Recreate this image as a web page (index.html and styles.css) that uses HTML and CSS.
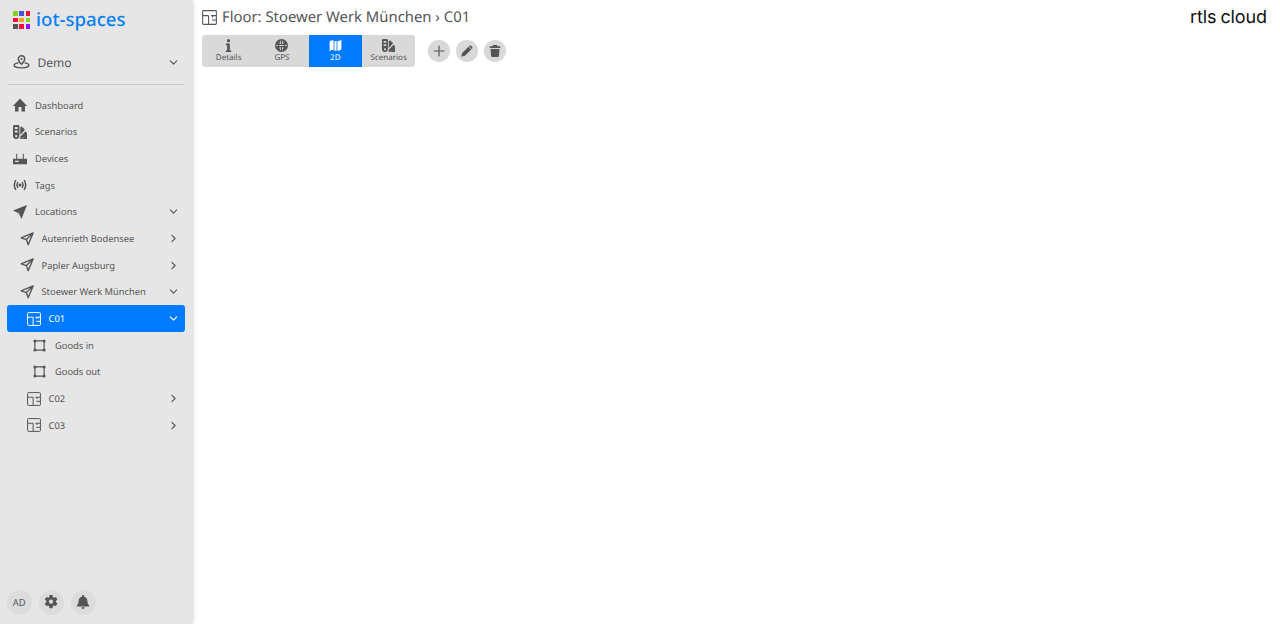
FILE: index.html
```html
<!DOCTYPE html>
<html>
<head>
    <title>iot-spaces</title>
    <link rel="stylesheet" href="styles.css">
</head>
<body>
    <svg class="sprite" xmlns="http://www.w3.org/2000/svg">
        <symbol id="i-home" viewBox="0 0 24 24"><path d="M9.500 23v-7.500h5V23h6v-9.500H24L12 1 0 13.500h3.500V23z"/></symbol>
        <symbol id="i-swatch" viewBox="0 0 24 24"><path fill-rule="evenodd" d="M0 2.500C0 1.100 1.100 0 2.500 0h6C9.900 0 11 1.100 11 2.500V19c0 2.800-2.200 5-5 5h-1c-2.800 0-5-2.200-5-5zM3 3.500v3.200h5V3.500zm0 6v3.200h5V9.500zM5.500 17a2 2 0 1 0 0 4 2 2 0 0 0 0-4z"/><path d="M12.500 4 15 2.500l5.500 5.500-8 9zM12.500 20l9-9.500 2.500 3v1.500L15.500 24H24v-8.500L14.500 24h-2z"/></symbol>
        <symbol id="i-router" viewBox="0 0 24 24"><path fill-rule="evenodd" d="M5.500 3h1.700v8.500h9.600V3h1.700v8.500H24V21H0v-9.500h5.500zM3.500 15v2h6.500v-2z"/></symbol>
        <symbol id="i-tags" viewBox="0 0 24 24"><circle cx="12" cy="12" r="2.600"/><path d="M4.500 4.500C1.500 8.500 1.500 15.500 4.500 19.500M19.500 4.500c3 4 3 11 0 15M8 8c-1.500 2.300-1.500 5.700 0 8M16 8c1.500 2.300 1.500 5.700 0 8" fill="none" stroke="currentColor" stroke-width="2.600" stroke-linecap="round"/></symbol>
        <symbol id="i-nav" viewBox="0 0 24 24"><path d="M24 0 0 9.500l10 4.500 4.500 10z"/></symbol>
        <symbol id="i-nav-line" viewBox="0 0 24 24"><path d="M22.500 1.500 2 10l9 3 3 9zM11 13 22.500 1.500" fill="none" stroke="currentColor" stroke-width="2.300" stroke-linejoin="round"/></symbol>
        <symbol id="i-floor" viewBox="0 0 24 24"><path d="M2.500 1h19A1.500 1.500 0 0 1 23 2.500v19a1.500 1.500 0 0 1-1.500 1.500h-19A1.500 1.500 0 0 1 1 21.500v-19A1.500 1.500 0 0 1 2.500 1zM1 9h9.500M10.500 9v14M14.500 9H23M16 16H23M17 9v3" fill="none" stroke="currentColor" stroke-width="1.700"/></symbol>
        <symbol id="i-area" viewBox="0 0 24 24"><path d="M3.500 3.500h17v17h-17z" fill="none" stroke="currentColor" stroke-width="2.200"/><circle cx="3.500" cy="3.500" r="2.800"/><circle cx="20.500" cy="3.500" r="2.800"/><circle cx="3.500" cy="20.500" r="2.800"/><circle cx="20.500" cy="20.500" r="2.800"/></symbol>
        <symbol id="i-pin" viewBox="0 0 24 24"><path d="M12 2.500a4.500 4.500 0 0 0-4.500 4.500c0 3 4.500 7.500 4.500 7.500s4.500-4.500 4.500-7.500A4.500 4.500 0 0 0 12 2.500z" fill="none" stroke="currentColor" stroke-width="2"/><circle cx="12" cy="7" r="1.500"/><path d="M7 12.500c-3.500.7-5.500 1.900-5.500 3.300 0 2 4.700 3.700 10.500 3.700s10.500-1.700 10.500-3.700c0-1.400-2-2.600-5.500-3.300" fill="none" stroke="currentColor" stroke-width="1.800" stroke-linecap="round"/></symbol>
        <symbol id="i-down" viewBox="0 0 24 24"><path d="M5 8.500l7 7 7-7" fill="none" stroke="currentColor" stroke-width="2.400" stroke-linecap="round" stroke-linejoin="round"/></symbol>
        <symbol id="i-right" viewBox="0 0 24 24"><path d="M8.500 5l7 7-7 7" fill="none" stroke="currentColor" stroke-width="2.400" stroke-linecap="round" stroke-linejoin="round"/></symbol>
        <symbol id="i-gear" viewBox="0 0 24 24"><path fill-rule="evenodd" d="M9.500 0h5l.8 3.500 1.700 1 3.500-1 2.500 4.300-2.700 2.400v2l2.700 2.400-2.500 4.300-3.500-1-1.700 1-.8 3.600h-5l-.8-3.600-1.700-1-3.500 1L1.500 14.600l2.700-2.400v-2L1.500 7.800 4 3.500l3.500 1 1.700-1zM12 7.800a3.700 3.700 0 1 0 0 7.400 3.700 3.700 0 0 0 0-7.400z"/></symbol>
        <symbol id="i-bell" viewBox="0 0 24 24"><path d="M12 0a2 2 0 0 0-2 2v.8C6.600 3.700 4.500 6.600 4.500 10c0 4.500-1.200 6-3 7.800V19.500h21v-1.700c-1.800-1.800-3-3.300-3-7.800 0-3.400-2.100-6.300-5.500-7.200V2a2 2 0 0 0-2-2zM9.200 21a2.800 2.800 0 0 0 5.600 0z"/></symbol>
        <symbol id="i-info" viewBox="0 0 24 24"><circle cx="12" cy="3" r="3"/><path d="M7 8.500h7.500V21H17v3H7v-3h2.500v-9.500H7z"/></symbol>
        <symbol id="i-globe" viewBox="0 0 24 24"><path fill-rule="evenodd" d="M12 0a12 12 0 1 0 0 24 12 12 0 0 0 0-24zM10.800 2.500C9.300 4.300 8.500 6.500 8.300 9h2.500V2.500zM13.200 2.500V9h2.500c-.2-2.500-1-4.700-2.500-6.500zM8.300 15c.2 2.500 1 4.700 2.500 6.500V15zM13.200 15v6.500c1.500-1.800 2.300-4 2.500-6.500zM2.300 11a9.500 9.500 0 0 0 0 2h3.400v-2zM8 11v2h8v-2zM18.300 11v2h3.400a9.500 9.500 0 0 0 0-2z"/></symbol>
        <symbol id="i-map" viewBox="0 0 24 24"><path d="M1 5c2.500-2.500 5-3 7.500-2v18c-2.500-1-5-.5-7.500 2zM15.500 3c2.500 1 5 .5 7.500-2v18c-2.500 2.500-5 3-7.500 2zM10 3.300c1.300.6 2.700.6 4 0v18c-1.300.6-2.700.6-4 0z"/></symbol>
        <symbol id="i-plus" viewBox="0 0 24 24"><path d="M12 2v20M2 12h20" fill="none" stroke="currentColor" stroke-width="2.400" stroke-linecap="round"/></symbol>
        <symbol id="i-pencil" viewBox="0 0 24 24"><path d="M0.500 23.500l1.800-7.300L15 3.500l5.500 5.500L7.800 21.700zM16.500 2c1.200-1.200 3-1.200 4.200 0L22 3.300c1.200 1.200 1.200 3 0 4.200l-.5.500L16 2.500z"/></symbol>
        <symbol id="i-trash" viewBox="0 0 24 24"><path d="M8 0h8l1 2.500h5.500V6h-21V2.500H7zM3 8h18l-1.200 14a2.200 2.200 0 0 1-2.200 2H6.400a2.200 2.200 0 0 1-2.200-2z"/></symbol>
    </svg>

    <div class="app">
        <!-- sidebar -->
        <aside class="sidebar">
            <div class="brand">
                <div class="brand-grid">
                    <span class="c-green"></span><span class="c-blue"></span><span class="c-red"></span>
                    <span class="c-red"></span><span class="c-orange"></span><span class="c-green"></span>
                    <span class="c-gray"></span><span class="c-red"></span><span class="c-purple"></span>
                </div>
                <span class="brand-name">iot-spaces</span>
            </div>

            <div class="org">
                <svg class="org-icon"><use href="#i-pin"/></svg>
                <span class="org-name">Demo</span>
                <svg class="chev"><use href="#i-down"/></svg>
            </div>

            <nav class="nav">
                <a class="nav-item"><svg class="ico"><use href="#i-home"/></svg><span class="label">Dashboard</span></a>
                <a class="nav-item"><svg class="ico"><use href="#i-swatch"/></svg><span class="label">Scenarios</span></a>
                <a class="nav-item"><svg class="ico"><use href="#i-router"/></svg><span class="label">Devices</span></a>
                <a class="nav-item"><svg class="ico"><use href="#i-tags"/></svg><span class="label">Tags</span></a>
                <a class="nav-item"><svg class="ico"><use href="#i-nav"/></svg><span class="label">Locations</span><svg class="chev"><use href="#i-down"/></svg></a>
                <a class="nav-item lvl1"><svg class="ico"><use href="#i-nav-line"/></svg><span class="label">Autenrieth Bodensee</span><svg class="chev"><use href="#i-right"/></svg></a>
                <a class="nav-item lvl1"><svg class="ico"><use href="#i-nav-line"/></svg><span class="label">Papler Augsburg</span><svg class="chev"><use href="#i-right"/></svg></a>
                <a class="nav-item lvl1"><svg class="ico"><use href="#i-nav-line"/></svg><span class="label">Stoewer Werk München</span><svg class="chev"><use href="#i-down"/></svg></a>
                <a class="nav-item lvl2 active"><svg class="ico"><use href="#i-floor"/></svg><span class="label">C01</span><svg class="chev"><use href="#i-down"/></svg></a>
                <a class="nav-item lvl3"><svg class="ico"><use href="#i-area"/></svg><span class="label">Goods in</span></a>
                <a class="nav-item lvl3"><svg class="ico"><use href="#i-area"/></svg><span class="label">Goods out</span></a>
                <a class="nav-item lvl2"><svg class="ico"><use href="#i-floor"/></svg><span class="label">C02</span><svg class="chev"><use href="#i-right"/></svg></a>
                <a class="nav-item lvl2"><svg class="ico"><use href="#i-floor"/></svg><span class="label">C03</span><svg class="chev"><use href="#i-right"/></svg></a>
            </nav>

            <div class="side-footer">
                <button class="round">AD</button>
                <button class="round"><svg class="round-ico"><use href="#i-gear"/></svg></button>
                <button class="round"><svg class="round-ico"><use href="#i-bell"/></svg></button>
            </div>
        </aside>

        <!-- main content -->
        <main class="content">
            <div class="page-head">
                <svg class="page-icon"><use href="#i-floor"/></svg>
                <h1 class="page-title">Floor: Stoewer Werk München › C01</h1>
                <span class="rtls-logo">rtls cloud</span>
            </div>

            <div class="toolbar">
                <div class="tabs">
                    <a class="tab"><svg class="tab-ico"><use href="#i-info"/></svg><span>Details</span></a>
                    <a class="tab"><svg class="tab-ico"><use href="#i-globe"/></svg><span>GPS</span></a>
                    <a class="tab active"><svg class="tab-ico"><use href="#i-map"/></svg><span>2D</span></a>
                    <a class="tab"><svg class="tab-ico"><use href="#i-swatch"/></svg><span>Scenarios</span></a>
                </div>
                <div class="actions">
                    <button class="action"><svg class="action-ico"><use href="#i-plus"/></svg></button>
                    <button class="action"><svg class="action-ico"><use href="#i-pencil"/></svg></button>
                    <button class="action"><svg class="action-ico"><use href="#i-trash"/></svg></button>
                </div>
            </div>
        </main>
    </div>
</body>
</html>
```

FILE: styles.css
```css
html, body { margin: 0; height: 100%; }
body {
    font-family: "Noto Sans", "Open Sans", sans-serif;
    color: #555;
    background: #fff;
    overflow: hidden;
    text-rendering: geometricPrecision;
}
.sprite { display: none; }
svg { fill: currentColor; }

.app { display: flex; height: 624px; }

/* sidebar */
.sidebar {
    width: 192px;
    flex: none;
    display: flex;
    flex-direction: column;
    background: #e6e6e6;
    box-shadow: 0 0 5px rgba(0, 0, 0, 0.25);
    box-sizing: border-box;
    padding: 0 7px;
}

.brand {
    display: flex;
    align-items: center;
    height: 40px;
    padding-left: 6px;
    gap: 6px;
}
.brand-grid {
    display: grid;
    grid-template-columns: repeat(3, 4.6px);
    grid-auto-rows: 4.6px;
    gap: 1.7px;
    width: 17px;
    flex: none;
}
.c-green { background: #7ed321; }
.c-blue { background: #4a54d4; }
.c-red { background: #f0143c; }
.c-orange { background: #f5a623; }
.c-gray { background: #555; }
.c-purple { background: #9013fe; }
.brand-name {
    font-size: 18.6px;
    font-weight: 500;
    color: #0a80f5;
    line-height: 1;
}

.org {
    display: flex;
    align-items: center;
    height: 45px;
    padding: 1px 0 0 6px;
    border-bottom: 1px solid #ccc;
    box-sizing: border-box;
}
.org-icon { width: 17px; height: 17px; margin-right: 7.500px; }
.org-name { font-size: 12px; flex: 1; }

.chev { width: 11px; height: 11px; flex: none; margin-right: 6.500px; }

.nav { margin-top: 7px; flex: 1; }
.nav-item {
    display: flex;
    align-items: center;
    height: 26.67px;
    padding-left: 6px;
    font-size: 9.33px;
    border-radius: 3px;
}
.ico { width: 14px; height: 14px; flex: none; margin-right: 8px; }
.label { flex: 1; white-space: nowrap; }
.nav-item.lvl1 { padding-left: 13px; }
.nav-item.lvl1 .label { margin-left: -0.5px; }
.nav-item.lvl2 { padding-left: 20px; }
.nav-item.lvl2 .label { margin-left: -0.5px; }
.nav-item.lvl3 { padding-left: 26px; }
.nav-item.lvl3 .ico { width: 13px; height: 13px; margin-right: 9px; }
.nav-item.active { background: #007bff; color: #fff; }

.side-footer {
    display: flex;
    gap: 6.5px;
    padding-bottom: 9px;
    margin-left: -0.5px;
}
.round {
    width: 25.5px;
    height: 25.5px;
    border: none;
    border-radius: 50%;
    padding: 0;
    background: #dcdcdc;
    color: #555;
    font-family: inherit;
    font-size: 9.33px;
    display: flex;
    align-items: center;
    justify-content: center;
}
.round-ico { width: 14px; height: 14px; }

/* main area */
.content { flex: 1; padding: 0 13px 0 10px; }

.page-head {
    display: flex;
    align-items: center;
    height: 34px;
    margin-bottom: 1px;
}
.page-icon { width: 15px; height: 15px; margin-right: 5px; }
.page-title {
    flex: 1;
    margin: 0;
    font-size: 14.85px;
    font-weight: 400;
    color: #555;
}
.rtls-logo {
    font-family: "Inter", sans-serif;
    font-size: 18px;
    font-weight: 400;
    letter-spacing: -0.1px;
    word-spacing: -1px;
    color: #111;
}

.toolbar { display: flex; align-items: center; }
.tabs {
    display: flex;
    border-radius: 3px;
    overflow: hidden;
    background: #d9d9d9;
}
.tab {
    width: 53.33px;
    height: 32px;
    box-sizing: border-box;
    padding-top: 4px;
    display: flex;
    flex-direction: column;
    align-items: center;
    font-size: 8px;
    color: #555;
}
.tab span { line-height: 10px; margin-top: 1px; }
.tab.active { background: #007bff; color: #fff; }
.tab-ico { width: 13px; height: 13px; }

.actions { display: flex; gap: 6.5px; margin-left: 13px; }
.action {
    width: 21.5px;
    height: 21.5px;
    border: none;
    border-radius: 50%;
    padding: 0;
    background: #d9d9d9;
    color: #555;
    display: flex;
    align-items: center;
    justify-content: center;
}
.action-ico { width: 12px; height: 12px; }
```
